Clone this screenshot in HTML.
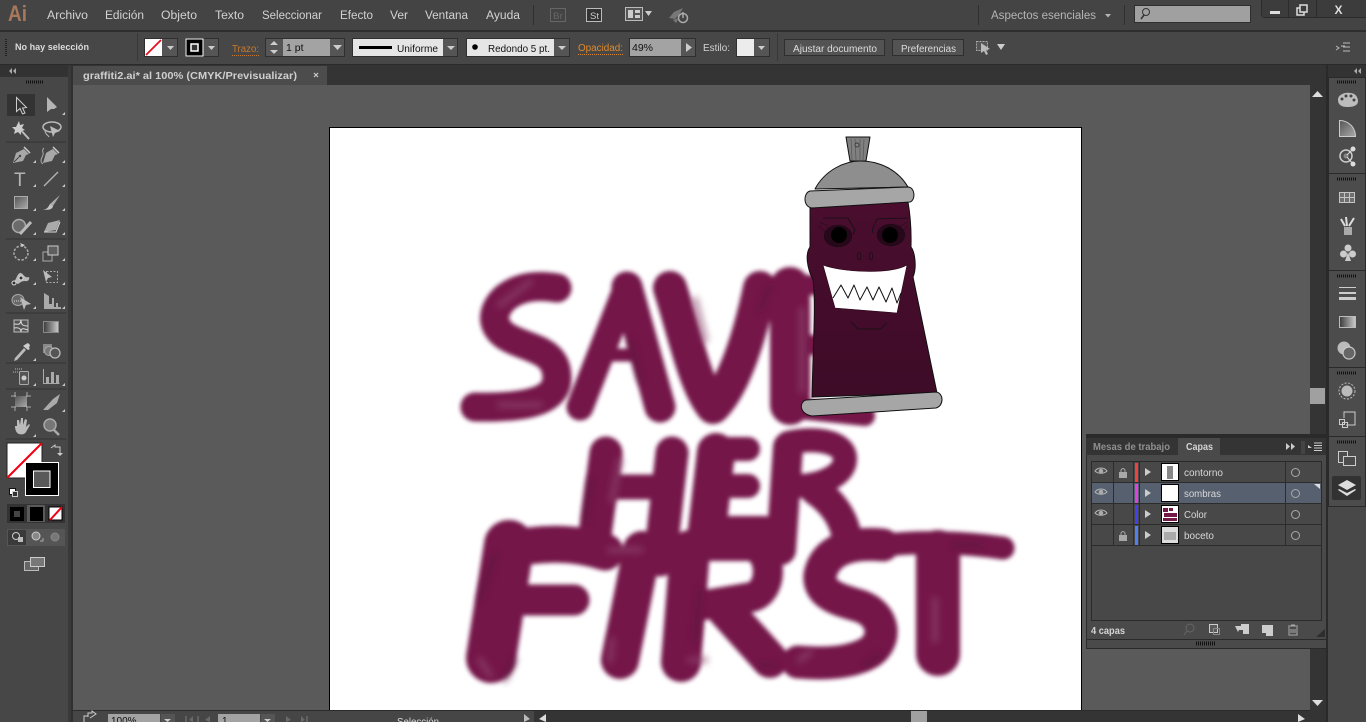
<!DOCTYPE html>
<html lang="es"><head><meta charset="utf-8"><title>Illustrator</title>
<style>
html,body{margin:0;padding:0;background:#474747;overflow:hidden;width:1366px;height:722px}
svg{display:block;position:absolute;left:0;top:0}
text{font-family:"Liberation Sans",sans-serif}
</style></head><body>
<svg width="1366" height="722" viewBox="0 0 1366 722" xmlns="http://www.w3.org/2000/svg">
<defs>
<filter id="b" x="-10%" y="-10%" width="120%" height="120%"><feGaussianBlur stdDeviation="2.2"/></filter>
<filter id="b2" x="-30%" y="-30%" width="160%" height="160%"><feGaussianBlur stdDeviation="3.5"/></filter>
<linearGradient id="gr" x1="0" x2="1" y1="0" y2="1"><stop offset="0" stop-color="#555"/><stop offset="1" stop-color="#aaa"/></linearGradient>
<linearGradient id="gh" x1="0" x2="1" y1="0" y2="0"><stop offset="0" stop-color="#3a3a3a"/><stop offset="1" stop-color="#ccc"/></linearGradient>
<linearGradient id="body" x1="0" x2="0" y1="0" y2="1"><stop offset="0" stop-color="#4a0d2e"/><stop offset="1" stop-color="#3d0c27"/></linearGradient>
</defs>

<!-- base -->
<rect width="1366" height="722" fill="#474747"/>
<!-- menu bar -->
<rect width="1366" height="30" fill="#444"/>
<rect y="30" width="1366" height="2" fill="#2e2e2e"/>
<text x="8" y="21" font-size="22" font-weight="bold" fill="#a8785a" textLength="19" lengthAdjust="spacingAndGlyphs">Ai</text>
<g font-size="11.5" fill="#d2d2d2">
<text x="47" y="19" textLength="41" lengthAdjust="spacingAndGlyphs">Archivo</text>
<text x="105" y="19" textLength="39" lengthAdjust="spacingAndGlyphs">Edición</text>
<text x="161" y="19" textLength="36" lengthAdjust="spacingAndGlyphs">Objeto</text>
<text x="215" y="19" textLength="29" lengthAdjust="spacingAndGlyphs">Texto</text>
<text x="262" y="19" textLength="60" lengthAdjust="spacingAndGlyphs">Seleccionar</text>
<text x="340" y="19" textLength="33" lengthAdjust="spacingAndGlyphs">Efecto</text>
<text x="390" y="19" textLength="18" lengthAdjust="spacingAndGlyphs">Ver</text>
<text x="425" y="19" textLength="43" lengthAdjust="spacingAndGlyphs">Ventana</text>
<text x="486" y="19" textLength="34" lengthAdjust="spacingAndGlyphs">Ayuda</text>
</g>
<rect x="533" y="5" width="1" height="20" fill="#2f2f2f"/>
<rect x="550.5" y="8.5" width="15" height="13" fill="none" stroke="#666"/>
<text x="553" y="19" font-size="9" fill="#666" textLength="10" lengthAdjust="spacingAndGlyphs">Br</text>
<rect x="586.5" y="8.5" width="15" height="13" fill="#333" stroke="#bbb"/>
<text x="590" y="19" font-size="9" fill="#ccc" textLength="9" lengthAdjust="spacingAndGlyphs">St</text>
<rect x="625.5" y="7.5" width="17" height="13" fill="#555" stroke="#bbb"/>
<rect x="628" y="10" width="5" height="8" fill="#ccc"/><rect x="635" y="10" width="5" height="3" fill="#ccc"/><rect x="635" y="15" width="5" height="3" fill="#ccc"/>
<path d="M645 11h7l-3.500 5z" fill="#ccc"/>
<path d="M683 8l-9 4-5 6 6 1 4-4z" fill="#777"/><path d="M673 20l3 3 3-5z" fill="#777"/>
<circle cx="683" cy="18" r="4.500" fill="none" stroke="#aaa" stroke-width="1.500"/><path d="M683 12v6" stroke="#aaa" stroke-width="1.500"/>
<rect x="978" y="5" width="1" height="20" fill="#2f2f2f"/>
<text x="991" y="19" font-size="11.500" fill="#b5b5b5" textLength="105" lengthAdjust="spacingAndGlyphs">Aspectos esenciales</text>
<path d="M1105 14h6l-3 3.500z" fill="#b5b5b5"/>
<rect x="1124" y="5" width="1" height="20" fill="#2f2f2f"/>
<rect x="1134.500" y="5.500" width="116" height="17" fill="#a0a0a0" stroke="#2e2e2e"/>
<circle cx="1146" cy="12" r="3.500" fill="none" stroke="#333"/><path d="M1144 15l-3 4" stroke="#333" stroke-width="1.500"/>
<path d="M1261 0h105v18h-101q-4 0-4-4z" fill="#2b2b2b"/>
<rect x="1262" y="0" width="26" height="17" fill="#3c3c3c"/><rect x="1289" y="0" width="27" height="17" fill="#3c3c3c"/><rect x="1317" y="0" width="49" height="17" fill="#3c3c3c"/>
<rect x="1270" y="11" width="10" height="3" fill="#ddd"/>
<rect x="1297" y="8" width="7" height="7" fill="none" stroke="#ddd" stroke-width="1.500"/><rect x="1300" y="5" width="7" height="7" fill="#3c3c3c" stroke="#ddd" stroke-width="1.500"/>
<text x="1334.500" y="14" font-size="12" font-weight="bold" fill="#ddd">X</text>

<!-- control bar -->
<rect y="32" width="1366" height="32" fill="#474747"/>
<rect y="64" width="1366" height="1" fill="#2a2a2a"/>
<path d="M6 39v18" stroke="#222" stroke-width="2" stroke-dasharray="1 1"/>
<text x="15" y="50" font-size="9.500" font-weight="bold" fill="#dcdcdc" textLength="74" lengthAdjust="spacingAndGlyphs">No hay selección</text>
<rect x="137" y="33" width="1" height="28" fill="#383838"/>
<rect x="144.500" y="38.500" width="33" height="18" fill="#555" stroke="#2f2f2f"/>
<rect x="145" y="39" width="17" height="17" fill="#fff"/><path d="M146 55L161 40" stroke="#e01020" stroke-width="1.800"/>
<path d="M167 46h7l-3.500 4z" fill="#ccc"/>
<rect x="185.500" y="38.500" width="33" height="18" fill="#555" stroke="#2f2f2f"/>
<rect x="186" y="39" width="17" height="17" fill="#000" stroke="#fff"/><rect x="191" y="44" width="7" height="7" fill="#333" stroke="#fff" stroke-width="1.500"/>
<path d="M208 46h7l-3.500 4z" fill="#ccc"/>
<text x="232" y="52" font-size="10" fill="#c9792b" textLength="27" lengthAdjust="spacingAndGlyphs">Trazo:</text>
<path d="M232 55.500h27" stroke="#c9792b" stroke-dasharray="1 1"/>
<rect x="265.500" y="38.500" width="79" height="18" fill="#555" stroke="#2f2f2f"/>
<rect x="283" y="39" width="47" height="17" fill="#a3a3a3"/>
<path d="M270 45l4-4 4 4zM270 50h8l-4 4z" fill="#ccc"/>
<text x="286" y="51" font-size="10.500" fill="#111">1 pt</text>
<path d="M333 45h9l-4.500 5z" fill="#ccc"/>
<rect x="352.500" y="38.500" width="105" height="18" fill="#555" stroke="#2f2f2f"/>
<rect x="353" y="39" width="90" height="17" fill="#e5e5e5"/>
<rect x="359" y="46" width="33" height="3" fill="#000"/>
<text x="397" y="52" font-size="10.500" fill="#111" textLength="41" lengthAdjust="spacingAndGlyphs">Uniforme</text>
<path d="M447 46h8l-4 4z" fill="#ccc"/>
<rect x="466.500" y="38.500" width="103" height="18" fill="#555" stroke="#2f2f2f"/>
<rect x="467" y="39" width="87" height="17" fill="#e5e5e5"/>
<circle cx="475" cy="47" r="2.800" fill="#000"/>
<text x="488" y="52" font-size="10.500" fill="#111" textLength="62" lengthAdjust="spacingAndGlyphs">Redondo 5 pt.</text>
<path d="M558 46h8l-4 4z" fill="#ccc"/>
<text x="578" y="51" font-size="10" fill="#e08a2c" textLength="45" lengthAdjust="spacingAndGlyphs">Opacidad:</text>
<path d="M578 54.500h45" stroke="#d98528" stroke-dasharray="1 1"/>
<rect x="629.500" y="38.500" width="66" height="18" fill="#555" stroke="#2f2f2f"/>
<rect x="630" y="39" width="51" height="17" fill="#a3a3a3"/>
<text x="632" y="51" font-size="10" fill="#111" textLength="21" lengthAdjust="spacingAndGlyphs">49%</text>
<path d="M686 43l6 4.500-6 4.500z" fill="#ccc"/>
<text x="703" y="51" font-size="10" fill="#d2d2d2" textLength="27" lengthAdjust="spacingAndGlyphs">Estilo:</text>
<rect x="736.500" y="38.500" width="33" height="18" fill="#555" stroke="#2f2f2f"/>
<rect x="737" y="39" width="17" height="17" fill="#ececec"/>
<path d="M758 46h7l-3.500 4z" fill="#ccc"/>
<rect x="777" y="33" width="1" height="28" fill="#383838"/>
<rect x="784.500" y="39.500" width="100" height="16" fill="#535353" stroke="#2f2f2f"/>
<text x="793" y="52" font-size="10" fill="#ddd" textLength="84" lengthAdjust="spacingAndGlyphs">Ajustar documento</text>
<rect x="892.500" y="39.500" width="71" height="16" fill="#535353" stroke="#2f2f2f"/>
<text x="901" y="52" font-size="10" fill="#ddd" textLength="55" lengthAdjust="spacingAndGlyphs">Preferencias</text>
<rect x="976.500" y="41.500" width="11" height="9" fill="#555" stroke="#aaa" stroke-dasharray="2 1"/>
<path d="M981 43l9 6-4 1 2 4-2 1-2-4-3 2z" fill="#bbb"/>
<path d="M997 44h8l-4 6z" fill="#ccc"/>
<path d="M1341 46h4M1343 43h7M1343 47h7M1343 51h7M1336 46l3 2-3 2" stroke="#bbb" fill="none"/>

<!-- tab row -->
<rect x="0" y="65" width="1366" height="20" fill="#343434"/>
<rect x="0" y="65" width="71" height="11" fill="#323232"/>
<path d="M9 71l3-3v6zM13 71l3-3v6z" fill="#aaa"/>
<rect x="73" y="66" width="254" height="19" fill="#4c4c4c"/>
<text x="83" y="79" font-size="10.500" font-weight="bold" fill="#cfcfcf" textLength="214" lengthAdjust="spacingAndGlyphs">graffiti2.ai* al 100% (CMYK/Previsualizar)</text>
<path d="M314 73l4 4m0-4l-4 4" stroke="#ccc" stroke-width="1.200"/>

<!-- canvas -->
<rect x="73" y="85" width="1237" height="626" fill="#5a5a5a"/>
<rect x="71" y="65" width="2" height="657" fill="#303030"/>
<rect x="329.500" y="127.500" width="752" height="600" fill="#fff" stroke="#000"/>

<!-- lettering -->
<g fill="none" stroke="#74184a" stroke-linecap="round" stroke-linejoin="round" filter="url(#b)">
<path d="M557 288C535 284 517 288 505 298C490 312 490 330 513 340C535 350 557 352 557 378C557 403 520 408 475 407" stroke-width="29"/>
<path d="M627 287L580 407" stroke-width="27"/><path d="M627 287L660 407" stroke-width="31"/><path d="M607 355H645" stroke-width="13"/>
<path d="M670 288C685 335 695 385 713 407C735 385 750 335 760 288" stroke-width="34"/>
<path d="M790 287L790 405" stroke-width="40"/><path d="M790 285H815M790 345H815M790 408L865 416" stroke-width="20"/>
<path d="M606 453L595 535" stroke-width="33"/><path d="M672 453L660 560" stroke-width="33"/><path d="M600 487H670" stroke-width="25"/>
<path d="M716 452L707 530" stroke-width="38"/><path d="M710 449H748M710 486H748M710 528H765" stroke-width="24"/>
<path d="M788 447L781 550" stroke-width="30"/><path d="M788 443C815 437 845 441 845 459C845 476 820 485 800 486" stroke-width="24"/><path d="M815 490C830 500 842 515 846 533" stroke-width="30"/>
<path d="M509 545L491 658" stroke-width="50"/><path d="M509 550C540 542 575 542 605 552" stroke-width="37"/><path d="M525 600H574" stroke-width="31"/>
<path d="M642 550L620 660" stroke-width="38"/>
<path d="M690 550L681 662" stroke-width="40"/><path d="M690 546H750C772 548 775 590 752 597L705 605" stroke-width="30"/><path d="M725 610L770 660" stroke-width="36"/>
<path d="M883 545C850 542 825 550 820 575C818 595 840 600 860 606C885 615 887 640 870 652C850 664 820 664 798 662" stroke-width="33"/>
<path d="M880 546C920 540 970 543 1003 548" stroke-width="23"/><path d="M938 552L938 654" stroke-width="44"/>
</g>
<g fill="none" stroke-linecap="round" filter="url(#b2)" opacity=".55">
<path d="M530 282L500 305M500 405H540M695 300L705 340M802 310V390M620 460L612 500M610 550H640M480 660L490 675M612 640L610 660M690 660H705M800 660L810 652M935 600V640" stroke="#8f4870" stroke-width="7"/>
<path d="M770 285L760 310M630 340L640 380M590 480L585 520M495 555L480 600M700 590L695 640M760 665H775M980 545H955M880 655L865 665M505 680L515 660" stroke="#52143a" stroke-width="5"/>
</g>

<!-- spray can -->
<g stroke="#111" stroke-linejoin="round">
<path d="M846 137L870 137L866 161L850 161Z" fill="#808080"/>
<path d="M851 139l1 21M855 139l1 21M860 139l0 21M864 139l-1 21" stroke="#555" stroke-width=".7" fill="none"/>
<circle cx="857" cy="145" r="2" fill="#888" stroke="#222" stroke-width=".7"/>
<path d="M815 189C825 170 845 161 860 161C880 161 898 170 908 187Z" fill="#8e8e8e"/>
<path d="M810 207L908 202C912 225 911 240 911 247C915 252 917 268 913 277L937 393L812 397C813 350 816 300 813 280C807 268 805 254 810 247Z" fill="url(#body)" stroke-width="1"/>
<path d="M810 191L908 187C915 187 916 200 910 202L812 208C803 207 803 193 810 191Z" fill="#a6a6a6"/>
<path d="M806 400L936 392C944 393 944 406 936 408L812 416C799 414 799 402 806 400Z" fill="#a6a6a6"/>
<path d="M823 265C840 272 890 275 907 265L897 313L835 308Z" fill="#fff" stroke="#2a0518" stroke-width=".6"/>
<path d="M833 298L841 285L848 298L854 285L860 300L867 287L873 300L879 287L886 302L892 288L897 303L901 293" fill="none" stroke-width="1"/>
<path d="M851 322L858 329H880L887 323" fill="none" stroke-width=".8"/>
<ellipse cx="859" cy="256" rx="1.800" ry="3.800" fill="none" stroke-width=".7"/>
<ellipse cx="871" cy="256" rx="1.800" ry="3.800" fill="none" stroke-width=".7"/>
<path d="M823 218H848L855 230L853 235M908 218L877 219L872 230L873 233" fill="none" stroke-width=".8"/>
<path d="M818 226L826 232M820 222L828 226M908 226L902 232M908 222L900 226" fill="none" stroke-width=".5"/>
<ellipse cx="838" cy="236" rx="14" ry="11" fill="#27071a" stroke-width=".4"/>
<ellipse cx="891" cy="235" rx="14" ry="11" fill="#27071a" stroke-width=".4"/>
</g>
<circle cx="839" cy="235" r="8" fill="#000"/><circle cx="890" cy="235" r="8" fill="#000"/>

<!-- status bar -->
<rect x="73" y="711" width="1237" height="11" fill="#464646"/>
<rect x="73" y="710" width="1253" height="1" fill="#2a2a2a"/>
<path d="M84 722v-6h4M90 718l6-4-4-3v2h-4v4" fill="none" stroke="#ccc"/>
<rect x="108" y="714" width="52" height="8" fill="#a3a3a3"/>
<text x="111" y="724" font-size="10" fill="#111">100%</text>
<rect x="161" y="714" width="14" height="8" fill="#555"/><path d="M164 719h7l-3.500 3z" fill="#ccc"/>
<path d="M186 716v6M198 716v6" stroke="#6a6a6a" stroke-width="1.500"/><path d="M193 716l-4 4 4 2zM210 716l-5 4 5 2z" fill="#6a6a6a"/>
<rect x="218" y="714" width="42" height="8" fill="#a3a3a3"/>
<text x="222" y="724" font-size="10" fill="#111">1</text>
<rect x="261" y="714" width="14" height="8" fill="#555"/><path d="M264 719h7l-3.500 3z" fill="#ccc"/>
<path d="M286 716l5 4-5 2zM301 716l4 4-4 2z" fill="#6a6a6a"/><path d="M307 716v6" stroke="#6a6a6a" stroke-width="1.500"/>
<text x="397" y="725" font-size="10.500" fill="#d6d6d6" textLength="42" lengthAdjust="spacingAndGlyphs">Selección</text>
<path d="M524 714l6 5-6 3z" fill="#bbb"/>
<rect x="534" y="711" width="776" height="11" fill="#343434"/>
<path d="M546 714l-7 5 7 3z" fill="#ddd"/>
<rect x="911" y="711" width="16" height="11" fill="#a0a0a0"/>
<path d="M1298 714l7 5-7 3z" fill="#ddd"/>

<!-- right scrollbar -->
<rect x="1310" y="85" width="16" height="637" fill="#343434"/>
<rect x="1326" y="65" width="2" height="657" fill="#2a2a2a"/>
<path d="M1312 97l5.500-6 5.500 6z" fill="#ddd"/>
<rect x="1310" y="388" width="15" height="16" fill="#a0a0a0"/>
<path d="M1312 700h11l-5.500 6z" fill="#ddd"/>

<!-- right dock -->
<rect x="1328" y="65" width="38" height="657" fill="#484848"/>
<rect x="1328" y="65" width="38" height="12" fill="#333"/>
<path d="M1354 71l3-3v6zM1358 71l3-3v6z" fill="#aaa"/>
<g fill="#4c4c4c" stroke="#2a2a2a">
<rect x="1328.500" y="77.500" width="37" height="96"/><rect x="1328.500" y="173.500" width="37" height="97"/><rect x="1328.500" y="270.500" width="37" height="97"/><rect x="1328.500" y="367.500" width="37" height="69"/><rect x="1328.500" y="436.500" width="37" height="70"/>
</g>
<g stroke="#111" stroke-dasharray="1 1" stroke-width="3">
<path d="M1337 82h20M1337 179h20M1337 276h20M1337 373h20M1337 442h20"/>
</g>
<!-- palette -->
<path d="M1338 100c0-6 8-8 12-7 6 0 8 5 8 8 0 6-8 6-11 6-5 0-9-2-9-7z" fill="#bdbdbd"/>
<circle cx="1342" cy="99" r="1.500" fill="#444"/><circle cx="1346" cy="96" r="1.500" fill="#444"/><circle cx="1351" cy="96" r="1.500" fill="#444"/><circle cx="1354" cy="100" r="1.500" fill="#444"/>
<!-- gradient guide -->
<path d="M1339.500 120.500v16h16c0-9-7-16-16-16z" fill="url(#gr)" stroke="#ccc"/>
<!-- graphic styles/links -->
<circle cx="1346" cy="156" r="6" fill="none" stroke="#ccc" stroke-width="1.500"/><circle cx="1346" cy="156" r="2.500" fill="#888"/>
<circle cx="1353" cy="149" r="2.500" fill="#ddd"/><circle cx="1353" cy="164" r="2.500" fill="#ddd"/><path d="M1347 155l6-6M1347 157l6 7" stroke="#ddd"/>
<!-- swatches -->
<g fill="#6f6f6f" stroke="#c4c4c4"><rect x="1339.500" y="192.500" width="5" height="5"/><rect x="1344.500" y="192.500" width="5" height="5"/><rect x="1349.500" y="192.500" width="5" height="5"/><rect x="1339.500" y="197.500" width="5" height="5"/><rect x="1344.500" y="197.500" width="5" height="5"/><rect x="1349.500" y="197.500" width="5" height="5"/></g>
<!-- brushes -->
<rect x="1344" y="227" width="8" height="8" fill="#aaa"/><path d="M1347 226l-1-9M1349 226l5-8M1345 226l-4-7" stroke="#ddd" stroke-width="2"/>
<!-- club -->
<circle cx="1348" cy="248" r="3.500" fill="#ccc"/><circle cx="1343.500" cy="254" r="3.500" fill="#ccc"/><circle cx="1352.500" cy="254" r="3.500" fill="#ccc"/><path d="M1348 252l3 9h-6z" fill="#ccc"/>
<!-- stroke -->
<rect x="1339" y="287" width="17" height="1" fill="#ccc"/><rect x="1339" y="292" width="17" height="2" fill="#ccc"/><rect x="1339" y="297" width="17" height="3" fill="#ccc"/>
<!-- gradient -->
<rect x="1339.500" y="316.500" width="16" height="11" fill="url(#gh)" stroke="#bbb"/>
<!-- transparency -->
<circle cx="1344" cy="348" r="6.500" fill="#bbb"/><circle cx="1349" cy="353" r="6" fill="#666" stroke="#ccc" stroke-width="1.200"/>
<!-- appearance -->
<circle cx="1347" cy="391" r="8" fill="none" stroke="#bbb" stroke-dasharray="2 1.500"/><circle cx="1347" cy="391" r="5.500" fill="#bbb"/>
<!-- transform -->
<path d="M1344 418v-6h11v13h-9" fill="none" stroke="#ccc"/><rect x="1339.500" y="419.500" width="5" height="5" fill="none" stroke="#ccc"/><rect x="1342.500" y="422.500" width="5" height="5" fill="none" stroke="#ccc"/>
<!-- artboards -->
<path d="M1338.500 451.500h9v5h-4v6h-5z" fill="none" stroke="#ccc"/><rect x="1343.500" y="456.500" width="12" height="9" fill="none" stroke="#ccc"/>
<!-- layers -->
<rect x="1332" y="476" width="29" height="24" rx="2" fill="#323232"/>
<path d="M1347 480l9 5-9 5-9-5z" fill="#ddd"/><path d="M1339 489l8 4 8-4 1 1-9 6-9-6z" fill="#ddd"/>

<!-- tools panel -->
<rect x="0" y="77" width="68" height="645" fill="#474747"/>
<rect x="68" y="65" width="3" height="657" fill="#393939"/>
<path d="M26 82h18" stroke="#111" stroke-width="3" stroke-dasharray="1 1"/>
<rect x="7" y="94" width="28" height="22" fill="#333"/>
<g stroke="#333"><path d="M6 142h60M6 239h60M6 313h60M6 363h60M6 389h60M6 439h60"/></g>
<g fill="#c8c8c8"><path d="M62 115l3-3v3zM33 163l3-3v3zM62 163l3-3v3zM33 187l3-3v3zM62 187l3-3v3zM33 211l3-3v3zM62 211l3-3v3zM33 235l3-3v3zM62 235l3-3v3zM33 261l3-3v3zM62 261l3-3v3zM33 285l3-3v3zM62 285l3-3v3zM33 309l3-3v3zM62 309l3-3v3zM33 361l3-3v3zM33 386l3-3v3zM62 386l3-3v3zM62 412l3-3v3zM33 437l3-3v3z"/></g>

<path d="M16.500 97.500v14l3.500-3 2.500 5.500 2.500-1-2.500-5 4-.5z" fill="#333" stroke="#ccc"/>
<path d="M47 97v15l4-3 3 0 3-2z" fill="#b5b5b5"/>
<!-- wand -->
<path d="M18 127l11 12" stroke="#bbb" stroke-width="2"/><path d="M19 121l1 4 4-1-2 4 3 2-4 1v4l-3-3-4 2 1-4-3-3 4 0z" fill="#ccc"/>
<!-- lasso -->
<ellipse cx="52" cy="127" rx="9" ry="5" fill="none" stroke="#bbb" stroke-width="1.500"/><path d="M50 126l10 5-5 2-2 4z" fill="#bbb"/><path d="M45 131c0 3 3 4 4 6" stroke="#bbb" fill="none"/>
<!-- pen -->
<path d="M24 149l5 5-3 1-3 6-10 2 3-10 6-3z" fill="#a8a8a8"/><path d="M24 147l6 6" stroke="#ccc" stroke-width="1.500"/><path d="M14 162l5-5" stroke="#444"/><circle cx="20" cy="156" r="1.200" fill="#444"/>
<path d="M53 149l5 5-3 1-3 6-9 2 3-10 5-3z" fill="#a8a8a8"/><path d="M53 147l6 6" stroke="#ccc" stroke-width="1.500"/><path d="M43 164c-4-3-1-6 0-9s-2-4 1-7" stroke="#aaa" fill="none"/>
<text x="14" y="186" font-family="Liberation Serif,serif" font-size="19" fill="#b5b5b5">T</text>
<path d="M44 186l14-14" stroke="#b5b5b5" stroke-width="1.300"/>
<rect x="14.500" y="196.500" width="13" height="12" fill="url(#gr)" stroke="#aaa"/>
<path d="M60 195l-10 9 3 2z" fill="#aaa"/><path d="M43 209c5 1 6-4 7-5l3 2c0 3-5 5-10 3z" fill="#c4c4c4"/>
<circle cx="19" cy="226" r="6.500" fill="#6b6b6b" stroke="#aaa" stroke-width="1.500"/><path d="M20 234l11-12" stroke="#bbb" stroke-width="3"/>
<path d="M44 232l4-9 12-3-4 10z" fill="#aaa"/><path d="M44 232h12l4-10" fill="none" stroke="#ddd"/>
<circle cx="21" cy="253" r="7" fill="none" stroke="#aaa" stroke-width="1.500" stroke-dasharray="2.500 1.500"/><path d="M20 243l5 2-3 2z" fill="#ccc"/>
<rect x="43" y="252" width="9" height="9" fill="none" stroke="#aaa"/><rect x="48" y="246" width="10" height="9" fill="#5e5e5e" stroke="#ccc"/>
<path d="M14 282c3-4 3-8 6-9s4 6 9 4c1 2-1 5-4 4-4 0-5 2-7 3z" fill="#bbb"/><circle cx="14" cy="283" r="2" fill="#333" stroke="#ddd"/><circle cx="21" cy="278" r="2" fill="#333" stroke="#ddd"/>
<rect x="46.500" y="271.500" width="11" height="11" fill="none" stroke="#aaa" stroke-dasharray="2 1.500"/><path d="M43 270l9 7-4 1-2 4z" fill="#bbb"/>
<ellipse cx="18" cy="300" rx="6" ry="5.500" fill="#666" stroke="#aaa"/><path d="M14 301h10" stroke="#ddd" stroke-dasharray="1 1"/><path d="M20 297l11 7-5 1-2 5z" fill="#bbb"/>
<path d="M44 293v16h17v-2h-9v-3h-3v-8zM46 295v12h2zM52 298h2v9h-2zM56 303h2v4h-2z" fill="#aaa"/>
<rect x="14" y="320" width="14" height="12" fill="#555" stroke="#bbb"/><path d="M14 324c4 0 6 2 7-4M21 320c0 5 2 6 7 6M21 332c0-3-2-5-7-4M21 332c0-4 2-4 7-2" fill="none" stroke="#ddd"/>
<rect x="43.500" y="321.500" width="15" height="11" fill="url(#gh)" stroke="#888"/>
<path d="M15 358l9-10 2 2-9 10-3 1z" fill="#bbb"/><path d="M23 346l3-2 2-1 2 2-1 3 1 1-2 1-5-4z" fill="#ccc"/>
<rect x="43" y="344" width="9" height="9" fill="#888"/><circle cx="49" cy="351" r="4.500" fill="#777" stroke="#aaa"/><circle cx="55" cy="353" r="5" fill="#555" stroke="#bbb" stroke-width="1.300"/>
<rect x="19.500" y="371.500" width="9" height="13" rx="1" fill="#555" stroke="#aaa"/><circle cx="24" cy="378" r="2.500" fill="#ccc"/><path d="M13 372h6M15 369h7" stroke="#bbb" stroke-dasharray="1 1"/>
<path d="M43.500 369v14.500h16" stroke="#aaa" fill="none"/><rect x="46" y="377" width="3" height="6" fill="#aaa"/><rect x="51" y="372" width="3" height="11" fill="#aaa"/><rect x="56" y="375" width="3" height="8" fill="#aaa"/>
<rect x="15" y="396" width="12" height="11" fill="url(#gr)"/><path d="M11 396h5M26 396h5M11 407h5M26 407h5M15 392v5M27 392v5M15 407v4M27 407v4" stroke="#aaa"/>
<path d="M43 410l10-11 7-5-3 9-9 7z" fill="#aaa"/>
<path d="M15 426l2 0 0-6 2 0 1 5 1-7 2 0 0 7 2-6 2 1-1 7 3-3 1 1-4 7c-1 2-4 3-7 2-3-1-4-5-4-8z" fill="#bbb"/>
<circle cx="50" cy="425" r="6" fill="#777" stroke="#aaa" stroke-width="1.500"/><path d="M54 430l5 5" stroke="#aaa" stroke-width="2.500"/>

<!-- fill/stroke -->
<rect x="7" y="443" width="35" height="35" fill="#fff" stroke="#222"/><path d="M7 478L42 443" stroke="#f00010" stroke-width="2"/>
<rect x="25.500" y="462.500" width="33" height="33" fill="#000" stroke="#fff"/>
<rect x="33.500" y="471" width="16.500" height="16.500" fill="#595959" stroke="#fff"/>
<path d="M51 448l4-3v2h5v7" fill="none" stroke="#ccc"/><path d="M57 453l3 3 3-3z" fill="#ccc"/>
<rect x="9.500" y="488.500" width="6" height="6" fill="#fff" stroke="#111"/><rect x="12.500" y="491.500" width="5" height="5" fill="#333" stroke="#ccc"/>
<rect x="7" y="504" width="58" height="19" fill="#333"/>
<rect x="10" y="507" width="14" height="14" fill="#000"/><rect x="14" y="511" width="6" height="6" fill="#444"/>
<rect x="27" y="505" width="18" height="17" fill="#5a5a5a"/><rect x="30" y="507" width="13" height="14" fill="#000"/>
<rect x="49" y="507" width="13" height="13" fill="#fff" stroke="#000"/><path d="M50 520l12-13" stroke="#f00010" stroke-width="2"/>
<rect x="7" y="529" width="58" height="17" fill="#555"/><rect x="8" y="530" width="18" height="15" fill="#3a3a3a"/>
<circle cx="16" cy="536" r="3.500" fill="none" stroke="#ccc"/><rect x="18" y="537" width="5" height="5" fill="#bbb"/>
<circle cx="36" cy="536" r="4" fill="#888" stroke="#ccc"/><path d="M40 541h3v-3" stroke="#aaa" fill="none"/>
<circle cx="55" cy="537" r="4" fill="#777" stroke="#888"/>
<rect x="24.500" y="561.500" width="14" height="9" fill="#666" stroke="#bbb"/><rect x="30.500" y="557.500" width="14" height="9" fill="#777" stroke="#ccc"/>

<!-- layers panel -->
<rect x="1086" y="434" width="240" height="214" fill="#2a2a2a"/>
<rect x="1086" y="438" width="240" height="17" fill="#343434"/>
<rect x="1178" y="438" width="42" height="17" fill="#4a4a4a"/>
<rect x="1087" y="455" width="239" height="193" fill="#4a4a4a"/>
<text x="1093" y="450" font-size="10" font-weight="bold" fill="#8f8f8f" textLength="77" lengthAdjust="spacingAndGlyphs">Mesas de trabajo</text>
<text x="1186" y="450" font-size="10" font-weight="bold" fill="#d4d4d4" textLength="27" lengthAdjust="spacingAndGlyphs">Capas</text>
<path d="M1286 443l4 3.500-4 3.500zM1291 443l4 3.500-4 3.500z" fill="#ccc"/>
<path d="M1302 441v13M1304 441v13" stroke="#555"/>
<path d="M1308 445l4 3 -4 0z" fill="#ccc"/><path d="M1314 443h8M1314 445.500h8M1314 448h8M1314 450.500h8" stroke="#ccc"/>
<rect x="1091.500" y="461.500" width="230" height="159" fill="#484848" stroke="#2a2a2a"/>
<rect x="1092" y="483" width="229" height="20" fill="#56606e"/>
<g stroke="#2c2c2c">
<path d="M1092 482.500h229M1092 503.500h229M1092 524.500h229M1092 545.500h229"/>
<path d="M1113.500 462v83M1133.500 462v83M1139.500 462v83M1285.500 462v83"/>
</g>
<rect x="1135" y="463" width="3" height="19" fill="#f04040"/>
<rect x="1135" y="484" width="3" height="19" fill="#e040e0"/>
<rect x="1135" y="505" width="3" height="19" fill="#4040f0"/>
<rect x="1135" y="526" width="3" height="19" fill="#4f80f0"/>
<g fill="none" stroke="#b5b5b5">
<path d="M1095 471c3-4 9-4 12 0c-3 3-9 3-12 0z"/><path d="M1095 492c3-4 9-4 12 0c-3 3-9 3-12 0z"/><path d="M1095 513c3-4 9-4 12 0c-3 3-9 3-12 0z"/>
</g>
<circle cx="1101" cy="471" r="2.300" fill="#aaa"/><circle cx="1101" cy="492" r="2.300" fill="#aaa"/><circle cx="1101" cy="513" r="2.300" fill="#aaa"/>
<g fill="#a8a8a8"><rect x="1119" y="472" width="8" height="6"/><rect x="1119" y="535" width="8" height="6"/></g>
<path d="M1121 472v-2q2-3 4 0v2M1121 535v-2q2-3 4 0v2" fill="none" stroke="#a8a8a8"/>
<path d="M1145 468l6 4-6 4zM1145 489l6 4-6 4zM1145 510l6 4-6 4zM1145 531l6 4-6 4z" fill="#ccc"/>
<rect x="1161.500" y="463.500" width="17" height="17" fill="#fff" stroke="#000"/>
<rect x="1167" y="466" width="6" height="13" fill="#888"/>
<rect x="1161.500" y="484.500" width="17" height="17" fill="#fff" stroke="#000"/>
<rect x="1161.500" y="505.500" width="17" height="17" fill="#fff" stroke="#000"/>
<path d="M1163 508h5v4h-5zM1169 508h4v3h-4zM1164 513h13v4h-13zM1163 518h14v3h-14z" fill="#74184a"/>
<rect x="1161.500" y="526.500" width="17" height="17" fill="#ddd" stroke="#000"/>
<rect x="1164" y="532" width="12" height="8" fill="#aaa"/>
<g font-size="10" fill="#d8d8d8">
<text x="1184" y="476" textLength="39" lengthAdjust="spacingAndGlyphs">contorno</text>
<text x="1184" y="497" textLength="37" lengthAdjust="spacingAndGlyphs">sombras</text>
<text x="1184" y="518" textLength="23" lengthAdjust="spacingAndGlyphs">Color</text>
<text x="1184" y="539" textLength="30" lengthAdjust="spacingAndGlyphs">boceto</text>
</g>
<g fill="none" stroke="#aaa"><circle cx="1295.500" cy="472.500" r="4"/><circle cx="1295.500" cy="493.500" r="4"/><circle cx="1295.500" cy="514.500" r="4"/><circle cx="1295.500" cy="535.500" r="4"/></g>
<path d="M1314 484h6v5z" fill="#ddd"/>
<text x="1091" y="634" font-size="10" font-weight="bold" fill="#d4d4d4" textLength="34" lengthAdjust="spacingAndGlyphs">4 capas</text>
<circle cx="1190" cy="628" r="4" fill="none" stroke="#666"/><path d="M1187 631l-3 4" stroke="#666"/>
<rect x="1209.500" y="624.500" width="8" height="8" fill="#5a5a5a" stroke="#ccc"/><rect x="1213.500" y="628.500" width="6" height="6" fill="none" stroke="#888"/>
<path d="M1235 626h6v-2h8v10h-6v-4h-4l-1 2z" fill="#ccc"/>
<path d="M1262 625h11v11h-7v-3h-4z" fill="#ccc"/>
<path d="M1288 626h10M1291 625h4M1289 627v8h8v-8M1291 629v4M1293 629v4M1295 629v4" fill="none" stroke="#aaa"/>
<path d="M1316 637l9-8v8z" fill="#222" opacity=".7"/>
<rect x="1086" y="639" width="240" height="1" fill="#2a2a2a"/>
<path d="M1196 643.500h19" stroke="#111" stroke-width="4" stroke-dasharray="1 1"/>
<rect x="1086" y="648" width="240" height="1" fill="#2a2a2a"/>
</svg>
</body></html>
